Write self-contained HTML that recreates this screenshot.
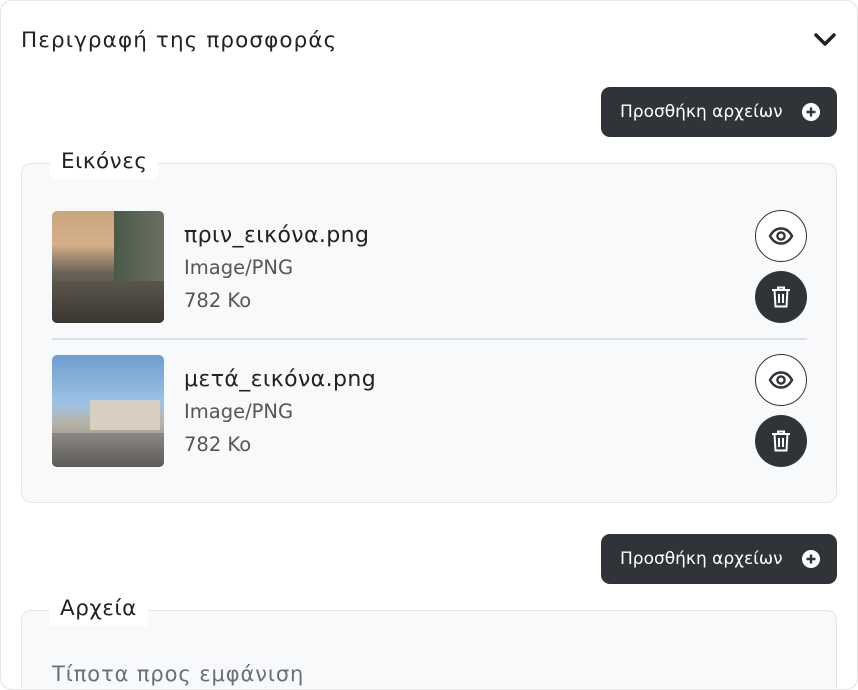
<!DOCTYPE html>
<html><head><meta charset="utf-8"><style>
*{box-sizing:border-box;margin:0;padding:0}
html,body{width:858px;height:690px;overflow:hidden}
body{background:#fff;font-family:"DejaVu Sans","Liberation Sans",sans-serif;color:#222}
#w{position:relative;width:858px;height:690px;overflow:hidden}
.card{position:absolute;left:0;top:0;width:858px;height:690px;border:1.5px solid #e3e5e8;border-radius:12px;background:#fff}
.title{position:absolute;left:21px;top:28px;font-size:21.5px;letter-spacing:1.1px;color:#222}
.chev{position:absolute;left:813px;top:31px}
.btn{position:absolute;left:601px;width:236px;height:50px;background:#303438;border-radius:9px;color:#fff;font-size:17px;display:flex;align-items:center;padding-left:19px}
.btn svg{position:absolute;right:17px;top:16px}
.fs{position:absolute;left:21px;width:816px;border:1.5px solid #e3e5e8;border-radius:10px;background:#f8f9fb}
.legend{position:absolute;background:#fff;font-size:21.5px;letter-spacing:0.5px;color:#222;padding:0 11px}
.thumb{position:absolute;left:52px;width:112px;height:112px;border-radius:5px;overflow:hidden}
.name{position:absolute;left:184px;font-size:22px;letter-spacing:0.4px;color:#222}
.meta{position:absolute;left:184px;font-size:19.5px;color:#555}
.eye{position:absolute;left:755px;width:52px;height:52px;border:1.5px solid #303438;border-radius:50%;background:#fff;display:flex;align-items:center;justify-content:center}
.del{position:absolute;left:755px;width:52px;height:52px;border-radius:50%;background:#303438;display:flex;align-items:center;justify-content:center}
</style></head><body><div id="w">
<div class="card"></div>
<div class="title">Περιγραφή της προσφοράς</div>
<svg class="chev" width="24" height="16" viewBox="0 0 24 16"><path d="M3 4l9 9 9-9" fill="none" stroke="#222" stroke-width="3.5" stroke-linecap="round" stroke-linejoin="round"/></svg>

<div class="btn" style="top:87px">Προσθήκη αρχείων<svg width="18" height="18" viewBox="0 0 18 18"><circle cx="9" cy="9" r="9" fill="#fff"/><path d="M9 4.5v9M4.5 9h9" stroke="#303438" stroke-width="2.4"/></svg></div>

<div class="fs" style="top:163px;height:340px"></div>
<div class="legend" style="left:50px;top:147px;height:32px;line-height:30px">Εικόνες</div>

<div class="thumb" style="top:211px;background:linear-gradient(180deg,#c9a57e 0%,#d6b089 30%,#6a6258 55%,#3f3a33 100%)">
<div style="position:absolute;right:0;top:0;width:50px;height:112px;background:linear-gradient(90deg,#4a5a48,#6b6f62)"></div>
<div style="position:absolute;left:0;top:70px;width:112px;height:42px;background:linear-gradient(180deg,#5a554c,#3a3630)"></div>
</div>
<div class="name" style="top:223px">πριν_εικόνα.png</div>
<div class="meta" style="top:256px">Image/PNG</div>
<div class="meta" style="top:289px">782 Ko</div>
<div class="eye" style="top:210px"><svg width="26" height="18" viewBox="0 0 26 18"><path d="M2 9C5 3.5 9 1.5 13 1.5S21 3.5 24 9C21 14.5 17 16.5 13 16.5S5 14.5 2 9Z" fill="none" stroke="#303438" stroke-width="2.4"/><circle cx="13" cy="9" r="3.6" fill="none" stroke="#303438" stroke-width="2.4"/></svg></div>
<div class="del" style="top:271px"><svg width="20" height="22" viewBox="0 0 20 22"><path d="M1 4h18M7 4V1.5h6V4M3.5 4l1 16.5h11l1-16.5M8 8v9M12 8v9" fill="none" stroke="#fff" stroke-width="2"/></svg></div>

<div style="position:absolute;left:52px;top:338px;width:755px;height:1.5px;background:#dcdfe3"></div>

<div class="thumb" style="top:355px;background:linear-gradient(180deg,#6f9fd0 0%,#9fc3e3 45%,#b8b3a8 60%,#7c7a78 100%)">
<div style="position:absolute;left:38px;top:45px;width:70px;height:30px;background:#d8cfc0"></div>
<div style="position:absolute;left:0;top:78px;width:112px;height:34px;background:linear-gradient(180deg,#8a8784,#5d5b59)"></div>
</div>
<div class="name" style="top:367px">μετά_εικόνα.png</div>
<div class="meta" style="top:400px">Image/PNG</div>
<div class="meta" style="top:433px">782 Ko</div>
<div class="eye" style="top:354px"><svg width="26" height="18" viewBox="0 0 26 18"><path d="M2 9C5 3.5 9 1.5 13 1.5S21 3.5 24 9C21 14.5 17 16.5 13 16.5S5 14.5 2 9Z" fill="none" stroke="#303438" stroke-width="2.4"/><circle cx="13" cy="9" r="3.6" fill="none" stroke="#303438" stroke-width="2.4"/></svg></div>
<div class="del" style="top:415px"><svg width="20" height="22" viewBox="0 0 20 22"><path d="M1 4h18M7 4V1.5h6V4M3.5 4l1 16.5h11l1-16.5M8 8v9M12 8v9" fill="none" stroke="#fff" stroke-width="2"/></svg></div>

<div class="btn" style="top:534px">Προσθήκη αρχείων<svg width="18" height="18" viewBox="0 0 18 18"><circle cx="9" cy="9" r="9" fill="#fff"/><path d="M9 4.5v9M4.5 9h9" stroke="#303438" stroke-width="2.4"/></svg></div>

<div class="fs" style="top:610px;height:78px;border-bottom:none;border-radius:10px 10px 0 0"></div>
<div class="legend" style="left:49px;top:594px;height:32px;line-height:30px">Αρχεία</div>
<div style="position:absolute;left:52px;top:662px;font-size:21px;letter-spacing:0.9px;color:#6b6f74">Τίποτα προς εμφάνιση</div>
</div></body></html>
